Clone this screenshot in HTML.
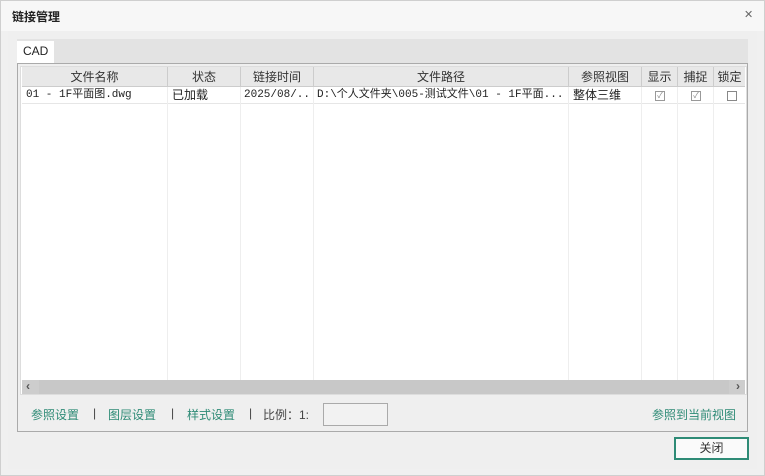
<!DOCTYPE html><html><head><meta charset="utf-8"><style>
*{margin:0;padding:0;box-sizing:border-box}
body{width:765px;height:476px;overflow:hidden;background:#f0f0f0;font-family:"Liberation Sans","Noto Sans CJK SC",sans-serif;font-size:12px;color:#222;position:relative}
.frame{position:absolute;left:0;top:0;width:765px;height:476px;border:1px solid #cfcfcf;z-index:10;pointer-events:none}
.title{position:absolute;left:0;top:0;width:765px;height:31px;background:#f7f7f7}
.title b{position:absolute;left:12px;top:8px;font-size:12px;font-weight:bold;color:#222}
.x{position:absolute;left:744px;top:8px;font-size:11px;color:#666}
.body{position:absolute;left:8px;top:31px;width:749px;height:438px;background:#efefef}
.strip{position:absolute;left:17px;top:39px;width:731px;height:24px;background:#e3e3e3}
.tab{position:absolute;left:17px;top:41px;width:37px;height:23px;background:#fff;font-size:12px;padding:3px 0 0 6px}
.panel{position:absolute;left:17px;top:63px;width:731px;height:369px;border:1px solid #aaa;background:#efefef}
.grid{position:absolute;left:20px;top:66px;width:727px;height:329px;background:#fff;border:1px solid #ddd}
.hdr{position:absolute;left:22px;top:67px;width:723px;height:20px;background:#e8e8e8;border-bottom:1px solid #ccc}
.c{position:absolute;top:0;height:20px;line-height:20px;text-align:center;border-right:1px solid #ccc;color:#333}
.row{position:absolute;left:22px;top:87px;width:723px;height:17px;border-bottom:1px solid #e6e6e6}
.d{position:absolute;top:0;height:17px;line-height:17px;font-family:"Liberation Mono","Noto Sans CJK SC",monospace;font-size:11px;white-space:nowrap;overflow:hidden}
.vl{position:absolute;width:1px;background:#eee}
.cb{position:absolute;top:91px;width:10px;height:10px;border:1px solid #999;background:#fff;font-size:8px;line-height:8px;text-align:center;color:#888}
.sb{position:absolute;left:22px;top:380px;width:723px;height:14px;background:#cdcdcd}
.sb span{position:absolute;top:-1px;font-size:12px;font-weight:bold;color:#555}
.lk{position:absolute;top:406px;color:#2e8b76;font-size:12px}
.sep{position:absolute;top:406px;color:#444}
.inp{position:absolute;left:323px;top:403px;width:65px;height:23px;border:1px solid #aaa;background:#f2f2f2}
.btn{position:absolute;left:674px;top:437px;width:75px;height:23px;border:2px solid #2e8b76;background:#fafafa;text-align:center;line-height:19px;color:#333}
</style></head><body>
<div class="title"><b>链接管理</b><span class="x">✕</span></div>
<div class="body"></div>
<div class="strip"></div><div class="tab">CAD</div>
<div class="panel"></div>
<div class="grid"></div>
<div class="hdr">
<div class="c" style="left:0;width:146px">文件名称</div>
<div class="c" style="left:146px;width:73px">状态</div>
<div class="c" style="left:219px;width:73px">链接时间</div>
<div class="c" style="left:292px;width:255px">文件路径</div>
<div class="c" style="left:547px;width:73px">参照视图</div>
<div class="c" style="left:620px;width:36px">显示</div>
<div class="c" style="left:656px;width:36px">捕捉</div>
<div class="c" style="left:692px;width:31px;border-right:none">锁定</div>
</div>
<div class="row">
<div class="d" style="left:4px;width:140px">01 - 1F平面图.dwg</div>
<div class="d" style="left:150px;font-family:'Liberation Sans','Noto Sans CJK SC',sans-serif;font-size:12px">已加载</div>
<div class="d" style="left:222px;width:68px">2025/08/...</div>
<div class="d" style="left:295px;width:250px">D:\个人文件夹\005-测试文件\01 - 1F平面...</div>
<div class="d" style="left:551px;font-family:'Liberation Sans','Noto Sans CJK SC',sans-serif;font-size:12px">整体三维</div>
</div>
<div class="vl" style="left:167px;top:87px;height:293px"></div>
<div class="vl" style="left:240px;top:87px;height:293px"></div>
<div class="vl" style="left:313px;top:87px;height:293px"></div>
<div class="vl" style="left:568px;top:87px;height:293px"></div>
<div class="vl" style="left:641px;top:87px;height:293px"></div>
<div class="vl" style="left:677px;top:87px;height:293px"></div>
<div class="vl" style="left:713px;top:87px;height:293px"></div>
<div class="cb" style="left:655px">✓</div>
<div class="cb" style="left:691px">✓</div>
<div class="cb" style="left:727px;border-color:#888"></div>
<div class="sb"><div style="position:absolute;left:17px;top:0;width:690px;height:14px;background:#c8c8c8"></div><span style="left:4px">‹</span><span style="left:714px">›</span></div>
<span class="lk" style="left:31px">参照设置</span><span class="sep" style="left:93px">|</span>
<span class="lk" style="left:108px">图层设置</span><span class="sep" style="left:171px">|</span>
<span class="lk" style="left:187px">样式设置</span><span class="sep" style="left:249px">|</span>
<span class="sep" style="left:263px">比例：1:</span>
<div class="inp"></div>
<span class="lk" style="left:652px">参照到当前视图</span>
<div class="btn">关闭</div>
<div class="frame"></div>
</body></html>
